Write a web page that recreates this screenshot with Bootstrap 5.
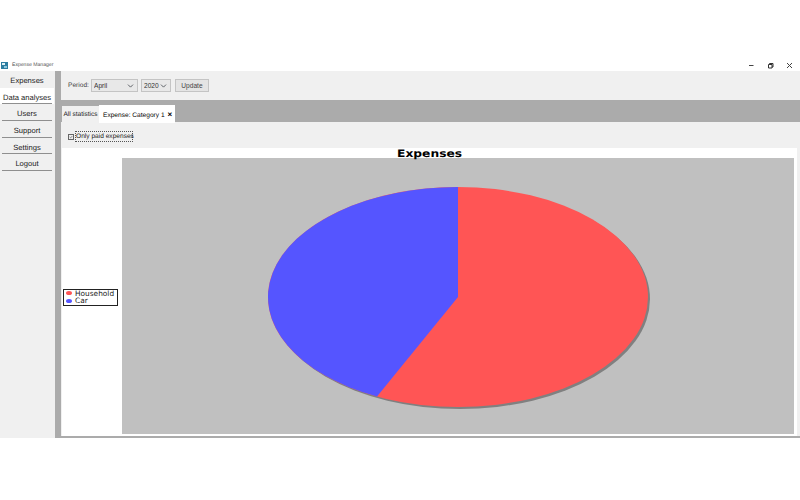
<!DOCTYPE html>
<html lang="en">
<head>
<meta charset="utf-8">
<title>Expense Manager</title>
<link href="https://cdn.jsdelivr.net/npm/bootstrap@5.3.0/dist/css/bootstrap.min.css" rel="stylesheet">
<style>
html,body{width:800px;height:500px;overflow:hidden;background:#fff;margin:0}
body{font-family:"Liberation Sans",sans-serif;font-size:6.6px;color:#333;padding-top:60px;text-rendering:geometricPrecision}
.app-title{height:11px;padding:0 7px 0 1px}
.app-title span{font-size:5.1px;color:#555;line-height:13px}
.win-ctrls{gap:12px;margin-left:auto}
.app-main{height:367px}
.side-pane{width:55px;background:#f0f0f0;padding-right:1px}
.side-pane .nav-link{height:16.7px;padding:0;margin:0 2px;line-height:20px;text-align:center;color:#222;font-size:7.6px;border-bottom:1px solid #8f8f8f;white-space:nowrap}
.side-pane .nav-item:first-child .nav-link{border-bottom:0}
.side-pane .nav-link.is-on{background:#fff;margin:0;padding:0 2px;border-bottom:0}
.side-pane .nav-link.is-on span{display:block;border-bottom:1px solid #8f8f8f;height:16.7px}
.work-pane{background:#ababab;padding-left:6px}
.tool-bar{height:29px;background:#f0f0f0;padding-left:7px;gap:3px}
.tool-bar label{margin-right:0;color:#444;width:20px;white-space:nowrap}
.tool-bar .form-select{height:13px;padding:0 0 0 2px;font-size:6.6px;line-height:11px;border-radius:0;border-color:#c4c4c4;background-color:#e8e8e8;background-size:7px 6px;background-position:right 3px center;color:#333}
.sel-month{width:47px}
.sel-year{width:30px}
.tool-bar .btn{height:13px;width:34px;padding:0;font-size:6.6px;line-height:11px;border-radius:0;background:#e4e4e4;border-color:#c4c4c4;color:#444;margin-left:1px}
.tab-strip{height:22px;align-items:flex-end;border:0;padding-left:1px}
.tab-strip .nav-link{border:0;border-radius:0;padding:0;font-size:6.5px;color:#222;height:16px;line-height:18px;margin:0}
.tab-strip .tab-a{width:37px;background:#f0f0f0;text-align:center;white-space:nowrap}
.tab-strip .tab-b{width:76px;height:18px;line-height:19px;background:#fff;padding-left:4px;white-space:nowrap;margin-top:-2px;margin-bottom:-1px;position:relative;z-index:1;font-size:6.6px}
.tab-x{font-size:8px;font-weight:700;margin-left:3px}
.tab-body{background:#f0f0f0;padding:1px 3px 2px 1px}
.filter-row{height:25px;padding-left:6px;padding-top:2px;background:#f0f0f0;gap:1px}
.filter-row .form-check-input:checked[type=checkbox]{width:6px;height:6px;margin:0;border-radius:0;border-color:#666;background-color:#f0f0f0;background-image:url("data:image/svg+xml,%3csvg xmlns='http://www.w3.org/2000/svg' viewBox='0 0 6 6'%3e%3cpath d='M1 3l1.400 1.400L5 1.500' fill='none' stroke='%23333' stroke-width='.8'/%3e%3c/svg%3e");flex:none}
.filter-row label{border:1px dotted #555;font-size:6.6px;line-height:9px;padding:0;width:58px;color:#222;white-space:nowrap}
.chart-box{background:#fff;height:288px}
.chart-head{height:10px;line-height:12px;font-family:"DejaVu Sans",sans-serif;font-weight:700;font-size:10.4px;color:#000;text-align:center}
.chart-head span{display:inline-block;transform:scaleX(1.18)}
.chart-row{height:276px}
.legend-col{width:60px;padding-left:1px}
.legend-box{width:55px;height:17px;border:1px solid #222;padding-left:2px;font-size:7.4px;line-height:7.5px;font-family:"DejaVu Sans",sans-serif;color:#222;background:#fff;margin-top:2px}
.dot-mark{width:6px;height:4px;border-radius:50%;display:inline-block;margin-right:3px;flex:none}
.plot-cell{width:672px;background:#c0c0c0}
.plot-cell svg{display:block}
.edge-line{height:2px;background:#ababab;margin:0 -3px -2px -1px}
</style>
</head>
<body>
<div class="app-title d-flex align-items-center">
  <svg width="7" height="7" viewBox="0 0 7 7"><rect width="7" height="7" fill="#2c7da0"/><path d="M1 1h3v2H1z" fill="#dff1f7"/><path d="M3 4h3v2H3z" fill="#8fc7dc"/></svg>
  <span class="ms-1">Expense Manager</span>
  <div class="win-ctrls d-flex align-items-center">
    <svg width="7" height="7" viewBox="0 0 7 7"><path d="M1 3.500h4.500" stroke="#444" fill="none"/></svg>
    <svg width="7" height="7" viewBox="0 0 7 7"><path d="M1.500 2.500h3.500v3.500h-3.500zM2.500 2.500v-1h3.500v3.500h-1" stroke="#333" fill="none"/></svg>
    <svg width="7" height="7" viewBox="0 0 7 7"><path d="M1 1l5 5M6 1l-5 5" stroke="#444" fill="none"/></svg>
  </div>
</div>
<div class="app-main d-flex">
  <div class="side-pane">
    <ul class="nav flex-column">
      <li class="nav-item"><a class="nav-link" href="#">Expenses</a></li>
      <li class="nav-item"><a class="nav-link is-on" href="#"><span>Data analyses</span></a></li>
      <li class="nav-item"><a class="nav-link" href="#">Users</a></li>
      <li class="nav-item"><a class="nav-link" href="#">Support</a></li>
      <li class="nav-item"><a class="nav-link" href="#">Settings</a></li>
      <li class="nav-item"><a class="nav-link" href="#">Logout</a></li>
    </ul>
  </div>
  <div class="work-pane flex-grow-1 d-flex flex-column">
    <div class="tool-bar d-flex align-items-center">
      <label for="m">Period:</label>
      <select id="m" class="form-select sel-month"><option>April</option></select>
      <select class="form-select sel-year"><option>2020</option></select>
      <button class="btn" type="button">Update</button>
    </div>
    <ul class="nav nav-tabs tab-strip">
      <li class="nav-item"><a class="nav-link tab-a" href="#">All statistics</a></li>
      <li class="nav-item"><a class="nav-link tab-b active" href="#">Expense: Category 1<span class="tab-x">×</span></a></li>
    </ul>
    <div class="tab-body flex-grow-1">
      <div class="filter-row d-flex align-items-center">
        <input class="form-check-input" type="checkbox" id="p" checked>
        <label for="p">Only paid expenses</label>
      </div>
      <div class="chart-box">
        <div class="chart-head"><span>Expenses</span></div>
        <div class="chart-row d-flex">
          <div class="legend-col d-flex align-items-center">
            <div class="legend-box">
              <div class="d-flex align-items-center"><i class="dot-mark" style="background:#ff5555"></i>Household</div>
              <div class="d-flex align-items-center"><i class="dot-mark" style="background:#5555ff"></i>Car</div>
            </div>
          </div>
          <div class="plot-cell">
            <svg width="672" height="276" viewBox="0 0 672 276">
              <ellipse cx="338" cy="141" rx="190" ry="110" fill="#808080"/>
              <ellipse cx="336" cy="139" rx="190" ry="110" fill="#ff5555"/>
              <path d="M336 139V29A190 110 0 0 0 255 238.500Z" fill="#5555ff"/>
            </svg>
          </div>
        </div>
      </div>
      <div class="edge-line"></div>
    </div>
  </div>
</div>
<script src="https://cdn.jsdelivr.net/npm/bootstrap@5.3.0/dist/js/bootstrap.bundle.min.js"></script>
</body>
</html>
